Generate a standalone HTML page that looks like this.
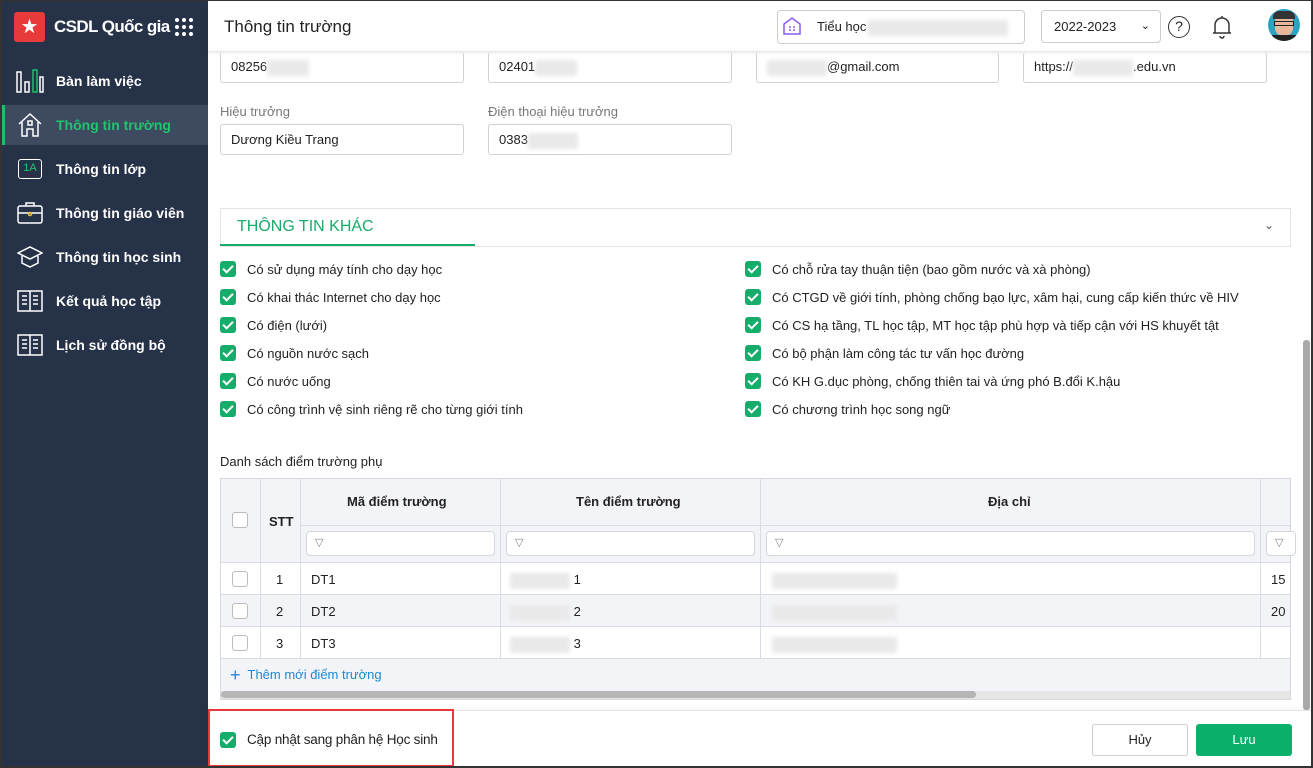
<!DOCTYPE html><html><head><meta charset="utf-8"><style>
*{box-sizing:border-box;margin:0;padding:0}
body{width:1313px;height:768px;overflow:hidden;font-family:"Liberation Sans",sans-serif;font-size:13px;color:#222;background:#fff;position:relative}
.a{position:absolute}
.sb{left:0;top:0;width:208px;height:768px;background:#263248;border-left:2px solid #333;border-top:1px solid #333}
.nav{left:0;width:208px;height:40px;color:#fff;font-weight:bold;font-size:14px;line-height:40px;padding-left:56px}
.inp{height:31px;border:1px solid #cfd3d8;border-radius:3px;padding-left:10px;line-height:29px;font-size:13px}
.blur{display:inline-block;background:#e9e9e9;filter:blur(2px);height:16px;vertical-align:middle}
.cb{width:16px;height:16px;border-radius:3px;background:#16ad6a}
.cb:after{content:"";position:absolute;left:5px;top:2px;width:4px;height:8px;border:solid #fff;border-width:0 2px 2px 0;transform:rotate(45deg)}
.ct{font-size:13px;line-height:16px}
.ec{width:16px;height:16px;border:1px solid #bbb;border-radius:3px;background:#fff}
.hl{background:#d8dce4}
.fi{height:25px;border:1px solid #d3d7dd;border-radius:4px;background:#fff}
.fi:before{content:"▽";position:absolute;left:8px;top:4px;font-size:11px;color:#888}
</style></head><body>
<div class="a sb"></div>
<div class="a" style="left:14px;top:12px;width:31px;height:30px;background:#e83a3a;border-radius:3px;color:#fff;text-align:center;font-size:20px;line-height:30px">★</div>
<div class="a" style="left:54px;top:14px;color:#fff;font-size:17px;font-weight:bold;line-height:26px;letter-spacing:-0.6px">CSDL Quốc gia</div>
<svg class="a" style="left:174px;top:17px" width="20" height="20"><g fill="#fff"><circle cx="3" cy="3" r="2"/><circle cx="10" cy="3" r="2"/><circle cx="17" cy="3" r="2"/><circle cx="3" cy="10" r="2"/><circle cx="10" cy="10" r="2"/><circle cx="17" cy="10" r="2"/><circle cx="3" cy="17" r="2"/><circle cx="10" cy="17" r="2"/><circle cx="17" cy="17" r="2"/></g></svg>
<div class="a" style="left:2px;top:105px;width:206px;height:40px;background:#3e4a60;border-left:3px solid #1fbf6a"></div>
<div class="a nav" style="top:61px">Bàn làm việc</div>
<div class="a nav" style="top:105px;color:#1fc46e">Thông tin trường</div>
<div class="a nav" style="top:149px">Thông tin lớp</div>
<div class="a nav" style="top:193px">Thông tin giáo viên</div>
<div class="a nav" style="top:237px">Thông tin học sinh</div>
<div class="a nav" style="top:281px">Kết quả học tập</div>
<div class="a nav" style="top:325px">Lịch sử đồng bộ</div>
<svg class="a" style="left:16px;top:68px" width="28" height="26" fill="none" stroke="#fff" stroke-width="1.5"><rect x="1" y="4" width="4" height="20"/><rect x="9" y="14" width="4" height="10"/><rect x="17" y="2" width="4" height="22" stroke="#1fbf6a"/><rect x="24" y="9" width="3" height="15"/></svg>
<svg class="a" style="left:18px;top:112px" width="24" height="26" fill="none" stroke="#fff" stroke-width="1.5"><path d="M1 12L12 2l11 10M4 10v14h5v-7h6v7h5V10"/><rect x="10" y="9" width="4" height="4"/></svg>
<div class="a" style="left:18px;top:159px;width:24px;height:20px;border:1.5px solid #fff;border-radius:3px;color:#1fc46e;font-size:11px;text-align:center;line-height:17px">1A</div>
<svg class="a" style="left:17px;top:201px" width="26" height="24" fill="none" stroke="#fff" stroke-width="1.5"><rect x="1" y="5" width="24" height="17" rx="2"/><path d="M9 5V2h8v3M1 12h24"/><circle cx="13" cy="13" r="1.5" stroke="#f0c040"/></svg>
<svg class="a" style="left:17px;top:245px" width="26" height="24" fill="none" stroke="#fff" stroke-width="1.5"><path d="M1 8L13 2l12 6-12 6z M5 11v7l8 4 8-4v-7"/></svg>
<svg class="a" style="left:17px;top:289px" width="26" height="24" fill="none" stroke="#fff" stroke-width="1.5"><rect x="1" y="2" width="24" height="20"/><path d="M13 2v20M5 7h5M5 11h5M5 15h5M16 7h5M16 11h5M16 15h5"/></svg>
<svg class="a" style="left:17px;top:333px" width="26" height="24" fill="none" stroke="#fff" stroke-width="1.5"><rect x="1" y="2" width="24" height="20"/><path d="M13 2v20M5 7h5M5 11h5M5 15h5M16 7h5M16 11h5M16 15h5"/></svg>

<div class="a" style="left:208px;top:0;width:1105px;height:52px;border-bottom:1px solid #e5e7ea;border-top:1px solid #333;box-shadow:0 2px 3px rgba(0,0,0,.05)"></div>
<div class="a" style="left:224px;top:15px;font-size:17px;line-height:24px">Thông tin trường</div>
<div class="a" style="left:777px;top:10px;width:248px;height:34px;border:1px solid #ccc;border-radius:4px"></div>
<svg class="a" style="left:781px;top:15px" width="22" height="22" fill="none" stroke="#8a5cf5" stroke-width="1.5"><path d="M3 9l8-6 8 6v10H3z"/><g fill="#8a5cf5" stroke="none"><circle cx="9" cy="12" r="1"/><circle cx="13" cy="12" r="1"/><circle cx="9" cy="15" r="1"/><circle cx="13" cy="15" r="1"/></g></svg>
<div class="a" style="left:817px;top:19px">Tiểu học<span class="blur" style="width:140px;margin-left:2px"></span></div>
<div class="a" style="left:1041px;top:10px;width:120px;height:33px;border:1px solid #ccc;border-radius:4px;padding-left:12px;line-height:31px">2022-2023<span style="position:absolute;right:10px;top:0;font-size:11px">&#8964;</span></div>
<div class="a" style="left:1168px;top:16px;width:22px;height:22px;border:1.5px solid #333;border-radius:50%;text-align:center;line-height:19px;font-size:14px">?</div>
<svg class="a" style="left:1211px;top:14px" width="22" height="26" fill="none" stroke="#333" stroke-width="1.5"><path d="M4 19V11a7 7 0 0 1 14 0v8h2H2z M9 22a2 2 0 0 0 4 0M11 2v2"/></svg>
<div class="a" style="left:1268px;top:9px;width:32px;height:32px;border-radius:50%;background:#2aa3c0;overflow:hidden"><div class="a" style="left:7px;top:5px;width:18px;height:22px;border-radius:8px;background:#e8b89a"></div><div class="a" style="left:5px;top:2px;width:22px;height:8px;background:#333;border-radius:6px 6px 0 0"></div><div class="a" style="left:6px;top:12px;width:20px;height:5px;border:1.5px solid #222"></div><div class="a" style="left:4px;top:26px;width:24px;height:10px;background:#222"></div></div>

<div class="a inp" style="left:220px;top:52px;width:244px;border-top:none">08256<span class="blur" style="width:42px"></span></div>
<div class="a inp" style="left:488px;top:52px;width:244px;border-top:none">02401<span class="blur" style="width:42px"></span></div>
<div class="a inp" style="left:756px;top:52px;width:243px;border-top:none"><span class="blur" style="width:60px"></span>@gmail.com</div>
<div class="a inp" style="left:1023px;top:52px;width:244px;border-top:none">https://<span class="blur" style="width:60px"></span>.edu.vn</div>
<div class="a" style="left:220px;top:104px;color:#777">Hiệu trưởng</div>
<div class="a" style="left:488px;top:104px;color:#777">Điện thoại hiệu trưởng</div>
<div class="a inp" style="left:220px;top:124px;width:244px">Dương Kiều Trang</div>
<div class="a inp" style="left:488px;top:124px;width:244px">0383<span class="blur" style="width:50px"></span></div>

<div class="a" style="left:220px;top:208px;width:1071px;height:39px;border:1px solid #e2e4e8"></div>
<div class="a" style="left:237px;top:218px;color:#1aaa6a;font-size:16px">THÔNG TIN KHÁC</div>
<div class="a" style="left:220px;top:244px;width:255px;height:2px;background:#16ad6a"></div>
<div class="a" style="left:1264px;top:218px;font-size:12px;color:#555">&#8964;</div>

<div class="a cb" style="left:220px;top:261px"></div><div class="a ct" style="left:247px;top:262px">Có sử dụng máy tính cho dạy học</div>
<div class="a cb" style="left:220px;top:289px"></div><div class="a ct" style="left:247px;top:290px">Có khai thác Internet cho dạy học</div>
<div class="a cb" style="left:220px;top:317px"></div><div class="a ct" style="left:247px;top:318px">Có điện (lưới)</div>
<div class="a cb" style="left:220px;top:345px"></div><div class="a ct" style="left:247px;top:346px">Có nguồn nước sạch</div>
<div class="a cb" style="left:220px;top:373px"></div><div class="a ct" style="left:247px;top:374px">Có nước uống</div>
<div class="a cb" style="left:220px;top:401px"></div><div class="a ct" style="left:247px;top:402px">Có công trình vệ sinh riêng rẽ cho từng giới tính</div>
<div class="a cb" style="left:745px;top:261px"></div><div class="a ct" style="left:772px;top:262px">Có chỗ rửa tay thuận tiện (bao gồm nước và xà phòng)</div>
<div class="a cb" style="left:745px;top:289px"></div><div class="a ct" style="left:772px;top:290px">Có CTGD về giới tính, phòng chống bạo lực, xâm hại, cung cấp kiến thức về HIV</div>
<div class="a cb" style="left:745px;top:317px"></div><div class="a ct" style="left:772px;top:318px">Có CS hạ tầng, TL học tập, MT học tập phù hợp và tiếp cận với HS khuyết tật</div>
<div class="a cb" style="left:745px;top:345px"></div><div class="a ct" style="left:772px;top:346px">Có bộ phận làm công tác tư vấn học đường</div>
<div class="a cb" style="left:745px;top:373px"></div><div class="a ct" style="left:772px;top:374px">Có KH G.dục phòng, chống thiên tai và ứng phó B.đổi K.hậu</div>
<div class="a cb" style="left:745px;top:401px"></div><div class="a ct" style="left:772px;top:402px">Có chương trình học song ngữ</div>

<div class="a" style="left:220px;top:454px">Danh sách điểm trường phụ</div>
<div class="a" style="left:220px;top:478px;width:1071px;height:222px;border:1px solid #d3d7df;background:#f3f4f8"></div>
<div class="a" style="left:221px;top:562px;width:1069px;height:96px;background:#fff"></div>
<div class="a" style="left:221px;top:594px;width:1069px;height:32px;background:#f3f4f8"></div>
<div class="a hl" style="left:300px;top:525px;width:990px;height:1px"></div>
<div class="a hl" style="left:221px;top:562px;width:1069px;height:1px"></div>
<div class="a hl" style="left:221px;top:594px;width:1069px;height:1px"></div>
<div class="a hl" style="left:221px;top:626px;width:1069px;height:1px"></div>
<div class="a hl" style="left:221px;top:658px;width:1069px;height:1px"></div>
<div class="a hl" style="left:260px;top:478px;width:1px;height:180px"></div>
<div class="a hl" style="left:300px;top:478px;width:1px;height:180px"></div>
<div class="a hl" style="left:500px;top:478px;width:1px;height:180px"></div>
<div class="a hl" style="left:760px;top:478px;width:1px;height:180px"></div>
<div class="a hl" style="left:1260px;top:478px;width:1px;height:180px"></div>
<div class="a ec" style="left:232px;top:512px"></div>
<div class="a" style="left:269px;top:514px;font-weight:bold">STT</div>
<div class="a" style="left:347px;top:494px;font-weight:bold">Mã điểm trường</div>
<div class="a" style="left:576px;top:494px;font-weight:bold">Tên điểm trường</div>
<div class="a" style="left:988px;top:494px;font-weight:bold">Địa chỉ</div>
<div class="a fi" style="left:306px;top:531px;width:189px"></div>
<div class="a fi" style="left:506px;top:531px;width:249px"></div>
<div class="a fi" style="left:766px;top:531px;width:489px"></div>
<div class="a fi" style="left:1266px;top:531px;width:30px"></div>
<div class="a ec" style="left:232px;top:571px"></div><div class="a" style="left:276px;top:572px">1</div><div class="a" style="left:311px;top:572px">DT1</div><div class="a" style="left:510px;top:572px"><span class="blur" style="width:60px"></span> 1</div><div class="a" style="left:772px;top:572px"><span class="blur" style="width:125px"></span></div><div class="a" style="left:1271px;top:572px">15</div>
<div class="a ec" style="left:232px;top:603px"></div><div class="a" style="left:276px;top:604px">2</div><div class="a" style="left:311px;top:604px">DT2</div><div class="a" style="left:510px;top:604px"><span class="blur" style="width:60px"></span> 2</div><div class="a" style="left:772px;top:604px"><span class="blur" style="width:125px"></span></div><div class="a" style="left:1271px;top:604px">20</div>
<div class="a ec" style="left:232px;top:635px"></div><div class="a" style="left:276px;top:636px">3</div><div class="a" style="left:311px;top:636px">DT3</div><div class="a" style="left:510px;top:636px"><span class="blur" style="width:60px"></span> 3</div><div class="a" style="left:772px;top:636px"><span class="blur" style="width:125px"></span></div>
<div class="a" style="left:230px;top:667px;color:#1a8ad6"><span style="font-size:18px;line-height:14px;vertical-align:-2px">+</span>&nbsp; Thêm mới điểm trường</div>
<div class="a" style="left:221px;top:691px;width:1069px;height:8px;background:#e6e6e6"></div>
<div class="a" style="left:221px;top:691px;width:755px;height:7px;background:#b5b5b5;border-radius:4px"></div>
<div class="a" style="left:1303px;top:340px;width:7px;height:370px;background:#aaa;border-radius:3px"></div>

<div class="a" style="left:208px;top:710px;width:1105px;height:58px;border-top:1px solid #e5e5e5;box-shadow:0 -2px 3px rgba(0,0,0,.04)"></div>
<div class="a" style="left:208px;top:709px;width:246px;height:58px;border:2px solid #e8393c"></div>
<div class="a cb" style="left:220px;top:732px"></div>
<div class="a" style="left:247px;top:732px;font-size:13.5px;letter-spacing:-0.2px">Cập nhật sang phân hệ Học sinh</div>
<div class="a" style="left:1092px;top:724px;width:96px;height:32px;border:1px solid #ccc;border-radius:3px;text-align:center;line-height:30px">Hủy</div>
<div class="a" style="left:1196px;top:724px;width:96px;height:32px;background:#0aaf6a;border-radius:3px;text-align:center;line-height:32px;color:#fff">Lưu</div>
<div class="a" style="left:0;top:766px;width:1313px;height:2px;background:#333"></div>
<div class="a" style="left:1311px;top:0;width:2px;height:768px;background:#333"></div>
</body></html>
